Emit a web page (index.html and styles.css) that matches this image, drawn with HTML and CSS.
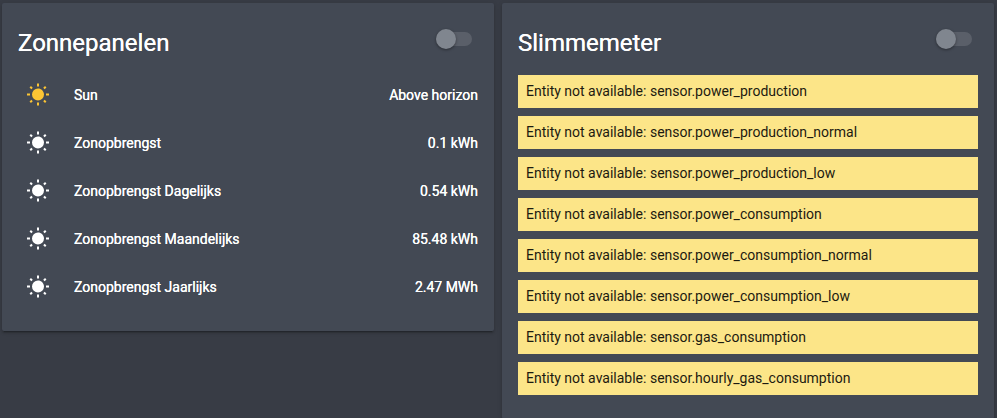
FILE: index.html
```html
<!DOCTYPE html>
<html lang="nl">

<head>
    <meta charset="UTF-8" />
    <meta name="viewport" content="width=device-width, initial-scale=1.0" />
    <title>Home Assistant</title>
    <link rel="stylesheet" href="styles.css">
</head>

<body>
    <svg class="icon-defs" aria-hidden="true">
        <symbol id="sunny" viewBox="0 0 24 24">
            <path d="M3.55,18.54L4.96,19.95L6.76,18.16L5.34,16.74M11,22.45C11.32,22.45 13,22.45 13,22.45V19.5H11M12,5.5A6,6 0 0,0 6,11.5A6,6 0 0,0 12,17.5A6,6 0 0,0 18,11.5C18,8.18 15.31,5.5 12,5.5M20,12.5H23V10.5H20M17.24,18.16L19.04,19.95L20.45,18.54L18.66,16.74M20.45,4.46L19.04,3.05L17.24,4.84L18.66,6.26M13,0.55H11V3.5H13M4,10.5H1V12.5H4M6.76,4.84L4.96,3.05L3.55,4.46L5.34,6.26L6.76,4.84Z" />
        </symbol>
    </svg>

    <main class="columns">
        <section class="card">
            <header class="card-header">
                <h2 id="zonnepanelen">Zonnepanelen</h2>
                <input type="checkbox" class="toggle" role="switch" aria-labelledby="zonnepanelen">
            </header>
            <ul class="states">
                <li class="row">
                    <span class="badge on"><svg class="icon"><use href="#sunny" /></svg></span>
                    <span class="name">Sun</span>
                    <span class="state">Above horizon</span>
                </li>
                <li class="row">
                    <span class="badge"><svg class="icon"><use href="#sunny" /></svg></span>
                    <span class="name">Zonopbrengst</span>
                    <span class="state">0.1 kWh</span>
                </li>
                <li class="row">
                    <span class="badge"><svg class="icon"><use href="#sunny" /></svg></span>
                    <span class="name">Zonopbrengst Dagelijks</span>
                    <span class="state">0.54 kWh</span>
                </li>
                <li class="row">
                    <span class="badge"><svg class="icon"><use href="#sunny" /></svg></span>
                    <span class="name">Zonopbrengst Maandelijks</span>
                    <span class="state">85.48 kWh</span>
                </li>
                <li class="row">
                    <span class="badge"><svg class="icon"><use href="#sunny" /></svg></span>
                    <span class="name">Zonopbrengst Jaarlijks</span>
                    <span class="state">2.47 MWh</span>
                </li>
            </ul>
        </section>

        <section class="card">
            <header class="card-header">
                <h2 id="slimmemeter">Slimmemeter</h2>
                <input type="checkbox" class="toggle" role="switch" aria-labelledby="slimmemeter">
            </header>
            <ul class="states">
                <li class="warning">Entity not available: sensor.power_production</li>
                <li class="warning">Entity not available: sensor.power_production_normal</li>
                <li class="warning">Entity not available: sensor.power_production_low</li>
                <li class="warning">Entity not available: sensor.power_consumption</li>
                <li class="warning">Entity not available: sensor.power_consumption_normal</li>
                <li class="warning">Entity not available: sensor.power_consumption_low</li>
                <li class="warning">Entity not available: sensor.gas_consumption</li>
                <li class="warning">Entity not available: sensor.hourly_gas_consumption</li>
            </ul>
        </section>
    </main>
</body>

</html>
```
FILE: styles.css
```css
* {
    box-sizing: border-box;
}

body {
    font-family: Roboto, 'Noto Sans', sans-serif;
    font-size: 14px;
    margin: 0;
    min-height: 100vh;
    background-color: #383c45;
    color: #fff;
}

.icon-defs {
    display: none;
}

.columns {
    display: grid;
    grid-template-columns: 1fr 1fr;
    align-items: start;
    gap: 8px;
    padding: 3px 3px 0 2px;
}

.card {
    background-color: #434954;
    border-radius: 2px;
    padding: 16px;
    box-shadow: 0 2px 2px 0 rgba(0, 0, 0, 0.14),
        0 1px 5px 0 rgba(0, 0, 0, 0.12),
        0 3px 1px -2px rgba(0, 0, 0, 0.2);
}

.card-header {
    display: flex;
    justify-content: space-between;
    align-items: flex-start;
    height: 56px;
    padding-right: 6px;
}

.card-header h2 {
    margin: 0;
    font-size: 24px;
    font-weight: 400;
    line-height: 48px;
    text-shadow: 0 0 0 currentColor;
}

.toggle {
    appearance: none;
    display: flex;
    align-items: center;
    width: 36px;
    height: 14px;
    margin: 13px 0 0;
    border-radius: 7px;
    background-color: #5a5f69;
    cursor: pointer;
}

.toggle::before {
    content: '';
    flex: none;
    width: 20px;
    height: 20px;
    border-radius: 50%;
    background-color: #80868f;
    box-shadow: 0 1px 3px 0 rgba(0, 0, 0, 0.4);
}

.toggle:checked {
    justify-content: flex-end;
}

.states {
    list-style: none;
    margin: 0;
    padding: 0;
}

.row {
    display: flex;
    align-items: center;
    height: 40px;
    margin-bottom: 8px;
    text-shadow: 0 0 0 currentColor;
}

.badge {
    display: flex;
    justify-content: center;
    width: 40px;
}

.badge.on {
    color: #fcc534;
}

.icon {
    width: 24px;
    height: 24px;
    fill: currentColor;
}

.name {
    flex: 1;
    margin-left: 16px;
}

.warning {
    margin-bottom: 8px;
    padding: 8px;
    line-height: 17px;
    background-color: #fce588;
    color: #1c1a10;
}
```
